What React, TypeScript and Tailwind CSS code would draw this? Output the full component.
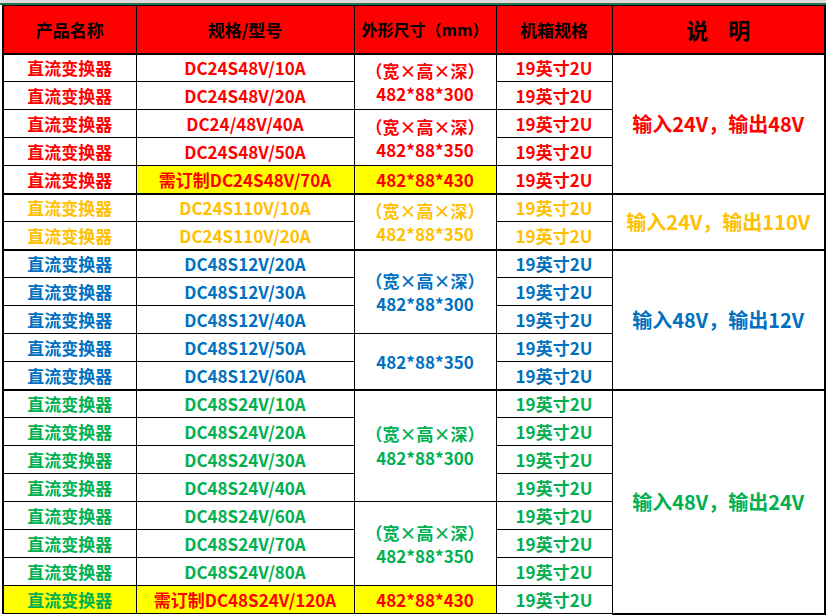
const RED = 'text-[#ff0000]';
const ORANGE = 'text-[#ffc000]';
const BLUE = 'text-[#0070c0]';
const GREEN = 'text-[#00b050]';

type Row = {
  color: string;
  model: string;
  custom?: boolean;
  nameYellow?: boolean;
  thickBottom?: boolean;
};

const rows: Row[] = [
  { color: RED, model: 'DC24S48V/10A' },
  { color: RED, model: 'DC24S48V/20A' },
  { color: RED, model: 'DC24/48V/40A' },
  { color: RED, model: 'DC24S48V/50A' },
  { color: RED, model: '需订制DC24S48V/70A', custom: true, thickBottom: true },
  { color: ORANGE, model: 'DC24S110V/10A' },
  { color: ORANGE, model: 'DC24S110V/20A', thickBottom: true },
  { color: BLUE, model: 'DC48S12V/20A' },
  { color: BLUE, model: 'DC48S12V/30A' },
  { color: BLUE, model: 'DC48S12V/40A' },
  { color: BLUE, model: 'DC48S12V/50A' },
  { color: BLUE, model: 'DC48S12V/60A', thickBottom: true },
  { color: GREEN, model: 'DC48S24V/10A' },
  { color: GREEN, model: 'DC48S24V/20A' },
  { color: GREEN, model: 'DC48S24V/30A' },
  { color: GREEN, model: 'DC48S24V/40A' },
  { color: GREEN, model: 'DC48S24V/60A' },
  { color: GREEN, model: 'DC48S24V/70A' },
  { color: GREEN, model: 'DC48S24V/80A' },
  { color: GREEN, model: '需订制DC48S24V/120A', custom: true, nameYellow: true },
];

// merged cells of the size column, keyed by start row index
const sizeCells: Record<number, { span: number; color: string; depth: string; label?: boolean; yellow?: boolean; lead?: string }> = {
  0: { span: 2, color: RED, depth: '300', label: true },
  2: { span: 2, color: RED, depth: '350', label: true },
  4: { span: 1, color: RED, depth: '430', yellow: true },
  5: { span: 2, color: ORANGE, depth: '350', label: true },
  7: { span: 3, color: BLUE, depth: '300', label: true },
  10: { span: 2, color: BLUE, depth: '350' },
  12: { span: 4, color: GREEN, depth: '300', label: true, lead: 'leading-[24px]' },
  16: { span: 3, color: GREEN, depth: '350', label: true },
  19: { span: 1, color: RED, depth: '430', yellow: true },
};

const noteCells: Record<number, { span: number; color: string; text: string }> = {
  0: { span: 5, color: RED, text: '输入24V，输出48V' },
  5: { span: 2, color: ORANGE, text: '输入24V，输出110V' },
  7: { span: 5, color: BLUE, text: '输入48V，输出12V' },
  12: { span: 8, color: GREEN, text: '输入48V，输出24V' },
};

const cell = 'border border-black p-0 text-center align-middle font-bold whitespace-nowrap';

export default function App() {
  return (
    <div
      className="w-[826px] h-[615px] overflow-hidden bg-white flex flex-col"
      style={{ fontFamily: '"Noto Sans CJK SC", "Noto Sans", sans-serif' }}
    >
      {/* excel column header remnants */}
      <div className="h-[3px] bg-[#dcdcdc] shrink-0" />
      <div className="h-[2px] bg-[#217346] shrink-0" />

      <div className="flex-1 pl-[2px]">
        <table className="border-collapse table-fixed w-[822px] text-[17px] leading-none">
          <colgroup>
            <col className="w-[133px]" />
            <col className="w-[218px]" />
            <col className="w-[142px]" />
            <col className="w-[116px]" />
            <col className="w-[213px]" />
          </colgroup>
          <thead>
            <tr className="h-[48px] bg-[#ff0000] text-black">
              <th className={`${cell} border-l-2 border-b-2`}>产品名称</th>
              <th className={`${cell} border-b-2`}>规格/型号</th>
              <th className={`${cell} border-b-2 text-[16px]`}>外形尺寸（mm）</th>
              <th className={`${cell} border-b-2`}>机箱规格</th>
              <th className={`${cell} border-b-2 border-r-2 text-[22px]`}>说&nbsp;&nbsp;&nbsp;&nbsp;明</th>
            </tr>
          </thead>
          <tbody>
            {rows.map((r, i) => {
              const size = sizeCells[i];
              const note = noteCells[i];
              const sizeEnd = size ? i + size.span - 1 : -1;
              const thickSize = size && rows[sizeEnd].thickBottom;
              return (
                <tr key={i} className="h-[28px]">
                  <td
                    className={`${cell} border-l-2 ${r.color} ${r.nameYellow ? 'bg-[#ffff00]' : ''} ${r.thickBottom ? 'border-b-2' : ''}`}
                  >
                    直流变换器
                  </td>
                  <td
                    className={`${cell} ${r.custom ? `bg-[#ffff00] ${RED}` : r.color} ${r.thickBottom ? 'border-b-2' : ''}`}
                  >
                    {r.model}
                  </td>
                  {size && (
                    <td
                      rowSpan={size.span}
                      className={`${cell} ${size.color} ${size.yellow ? 'bg-[#ffff00]' : ''} ${thickSize ? 'border-b-2' : ''} ${size.lead ?? 'leading-[23px]'}`}
                    >
                      {size.label && (
                        <>
                          （宽×高×深）
                          <br />
                        </>
                      )}
                      482*88*{size.depth}
                    </td>
                  )}
                  <td className={`${cell} ${r.color} ${r.thickBottom ? 'border-b-2' : ''}`}>19英寸2U</td>
                  {note && (
                    <td
                      rowSpan={note.span}
                      className={`${cell} border-r-2 border-b-2 text-[20px] ${note.color}`}
                    >
                      {note.text}
                    </td>
                  )}
                </tr>
              );
            })}
          </tbody>
        </table>
      </div>

      <div className="h-[2px] bg-[#217346] shrink-0" />
    </div>
  );
}
